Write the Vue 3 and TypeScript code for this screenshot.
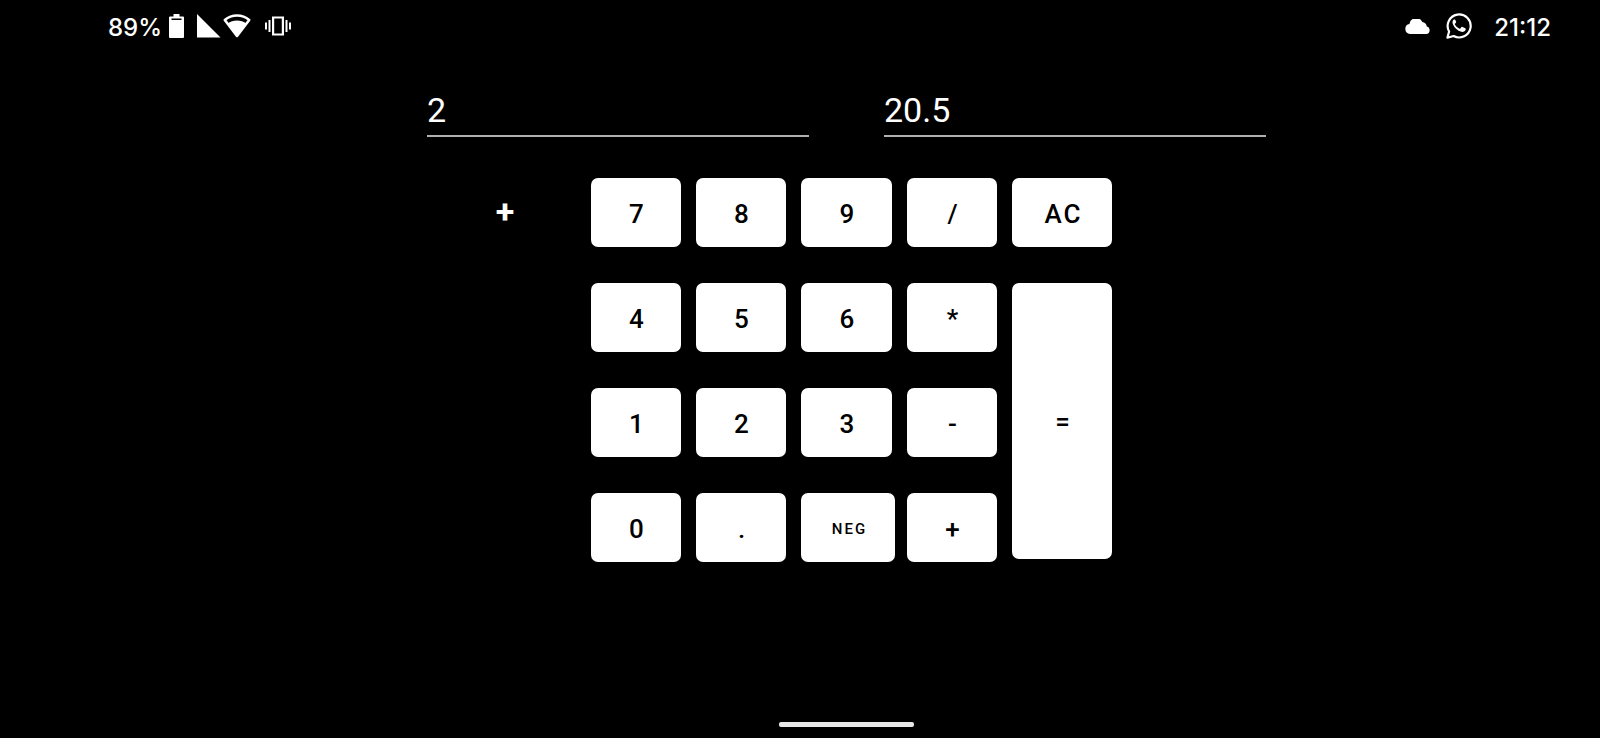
<script setup lang="ts">
import { ref } from 'vue'

interface Key {
  label: string
  kind?: 'tall' | 'small'
}

const keys: Key[] = [
  { label: '7' }, { label: '8' }, { label: '9' }, { label: '/' }, { label: 'AC' },
  { label: '4' }, { label: '5' }, { label: '6' }, { label: '*' }, { label: '=', kind: 'tall' },
  { label: '1' }, { label: '2' }, { label: '3' }, { label: '-' },
  { label: '0' }, { label: '.' }, { label: 'NEG', kind: 'small' }, { label: '+' },
]

const first = ref('2')
const second = ref('20.5')
const operator = ref('+')
const target = ref<1 | 2>(2)

function calculate(a: number, b: number): number {
  switch (operator.value) {
    case '+': return a + b
    case '-': return a - b
    case '*': return a * b
    case '/': return a / b
    default: return b
  }
}

function press(label: string): void {
  const field = target.value === 1 ? first : second
  if (/^[0-9.]$/.test(label)) {
    field.value += label
  } else if (label === 'AC') {
    first.value = ''
    second.value = ''
    operator.value = ''
    target.value = 1
  } else if (label === 'NEG') {
    field.value = field.value.startsWith('-') ? field.value.slice(1) : '-' + field.value
  } else if (label === '=') {
    first.value = String(calculate(Number(first.value), Number(second.value)))
    second.value = ''
    operator.value = ''
    target.value = 1
  } else {
    operator.value = label
    target.value = 2
  }
}
</script>

<template>
  <div class="screen">
    <header class="status">
      <div class="group">
        <span class="percent">89%</span>
        <svg class="battery" width="15" height="24" viewBox="0 0 15 24" aria-hidden="true">
          <path fill="#fff" fill-rule="evenodd" d="M4.5 0h6v2.5H14A1 1 0 0 1 15 3.500V23a1 1 0 0 1-1 1H1a1 1 0 0 1-1-1V3.500a1 1 0 0 1 1-1h3.500zM2.500 4.500V6h10V4.500z" />
        </svg>
        <svg class="signal" width="24" height="24" viewBox="0 0 24 24" aria-hidden="true">
          <path fill="#fff" d="M0 0 23.500 23.500H0z" />
        </svg>
        <svg class="wifi" width="28" height="24" viewBox="0 0 28 24" aria-hidden="true">
          <path fill="none" stroke="#fff" stroke-width="2.600" stroke-linejoin="round" d="M14 22 1.800 6C5.300 3 9.500 1.500 14 1.500S22.700 3 26.200 6z" />
          <path fill="#fff" d="M4.500 9.500C7.300 7.500 10.500 6.500 14 6.500s6.700 1 9.500 3L14 23z" />
        </svg>
        <svg class="vibrate" width="26" height="20" viewBox="0 0 26 20" aria-hidden="true">
          <path fill="none" stroke="#fff" stroke-width="2.200" d="M8.100 1.500h9.800v17H8.100z" />
          <path fill="none" stroke="#fff" stroke-width="2" d="M1 6.500v7M4.500 4v12M21.500 4v12M25 6.500v7" />
        </svg>
      </div>
      <div class="group">
        <svg class="cloud" width="26" height="15" viewBox="0 0 26 15" aria-hidden="true">
          <path fill="#fff" d="M5 15a5 5 0 0 1-.6-9.900A6.800 6.800 0 0 1 17.300 3a5.300 5.300 0 0 1 4.500 4.500A3.900 3.900 0 0 1 21.800 15z" />
        </svg>
        <svg class="whatsapp" width="26" height="26" viewBox="0 0 26 26" aria-hidden="true">
          <path fill="none" stroke="#fff" stroke-width="2.200" stroke-linejoin="round" d="M1.400 24.700 3.100 18.500A11.500 11.500 0 1 1 7.600 23z" />
          <path fill="#fff" d="M9.300 6.900c-.3-.6-.9-.6-1.400-.3C6.600 7.600 6.200 9 6.700 10.500c1.400 4.200 4.900 7.200 8.700 8.300 1.900.4 4-.7 4.300-2.400.1-.5 0-.9-.4-1.100l-2.800-1.400c-.4-.2-.8-.1-1 .2l-1.200 1.400c-.2.3-.6.3-.9.200-2-.9-3.500-2.300-4.500-4.100-.2-.3-.1-.6.1-.8l1-1.300c.2-.3.2-.6.1-.9z" />
        </svg>
        <time class="clock">21:12</time>
      </div>
    </header>

    <main class="calculator">
      <div class="fields">
        <input v-model="first" class="field" type="text" inputmode="decimal" aria-label="First number" @focus="target = 1" />
        <input v-model="second" class="field" type="text" inputmode="decimal" aria-label="Second number" @focus="target = 2" />
      </div>
      <div class="body">
        <output class="operator" aria-label="Operator">{{ operator }}</output>
        <div class="keypad">
          <button
            v-for="key in keys"
            :key="key.label"
            type="button"
            class="key"
            :class="key.kind"
            @click="press(key.label)"
          >{{ key.label }}</button>
        </div>
      </div>
    </main>

    <footer class="navigation"><div class="handle"></div></footer>
  </div>
</template>

<style>
body {
  background: #000;
}
</style>

<style scoped>
.screen {
  display: flex;
  flex-direction: column;
  min-height: 100vh;
  background: #000;
  color: #fff;
  font-family: Roboto, "Liberation Sans", sans-serif;
}

.status {
  display: flex;
  justify-content: space-between;
  height: 52px;
  padding: 0 49px 0 108px;
  font-family: Inter, Roboto, sans-serif;
  font-size: 24px;
  font-weight: 500;
  line-height: 32px;
}

.group {
  display: flex;
  align-items: center;
}

.percent,
.clock {
  padding-top: 4px;
}

.battery {
  margin-left: 7px;
}

.signal {
  margin-left: 13px;
}

.wifi {
  margin-left: 2px;
}

.vibrate {
  margin-left: 14px;
}

.whatsapp {
  margin: 0 22px 0 15px;
}

.calculator {
  flex: 1;
  display: flex;
  flex-direction: column;
  align-items: center;
  padding: 36px 0 24px 93px;
}

.fields,
.body {
  width: 100%;
  max-width: 839px;
}

.fields {
  display: flex;
  gap: 75px;
}

.field {
  flex: 1;
  min-width: 0;
  box-sizing: border-box;
  height: 49px;
  padding: 0 0 4px;
  border: 0;
  border-bottom: 2px solid #b0b0b0;
  border-radius: 0;
  outline: 0;
  background: transparent;
  color: #fff;
  font: 400 34px/40px Roboto, "Liberation Sans", sans-serif;
}

.body {
  display: grid;
  grid-template-columns: 156px auto;
  justify-content: start;
  gap: 8px;
  margin-top: 41px;
}

.operator {
  font-size: 34px;
  font-weight: 700;
  line-height: 66px;
  text-align: center;
}

.keypad {
  display: grid;
  grid-template-columns: 90px 90px 91px 90px 100px;
  grid-auto-rows: 69px;
  gap: 36px 15px;
}

.key {
  padding: 2px 0 0 3px;
  border: 0;
  border-radius: 7px;
  background: #fff;
  color: #000;
  font: 500 26px/32px Roboto, "Liberation Sans", sans-serif;
  letter-spacing: 2px;
  cursor: pointer;
}

.small {
  width: 94px;
  font-size: 15px;
}

.tall {
  grid-row: span 3;
  margin-bottom: 3px;
}

.navigation {
  display: flex;
  justify-content: center;
  padding: 0 0 11px 93px;
}

.handle {
  width: 135px;
  height: 5px;
  border-radius: 2px;
  background: #e8e8e8;
}
</style>
